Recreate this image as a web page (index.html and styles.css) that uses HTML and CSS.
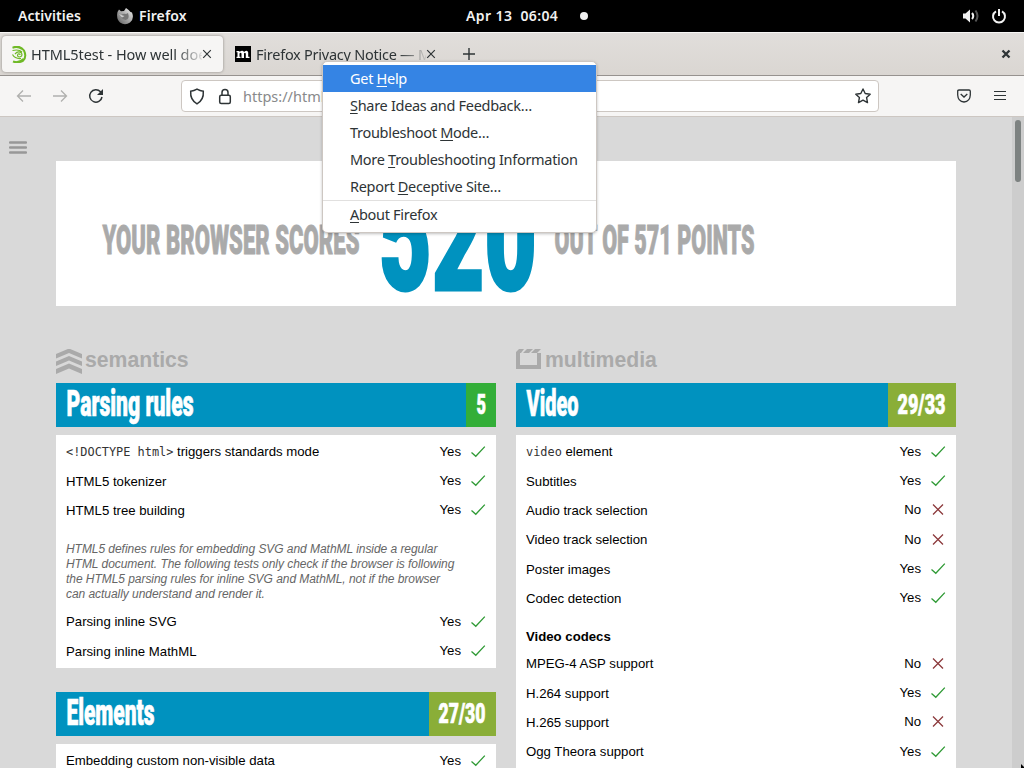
FILE: index.html
```html
<!DOCTYPE html>
<html lang="en">
<head>
<meta charset="utf-8">
<title>HTML5test - How well does your browser support HTML5?</title>
<link rel="stylesheet" href="styles.css">
</head>
<body>
<svg class="defs" aria-hidden="true">
  <symbol id="yes" viewBox="0 0 16 14"><path d="M1.500 7.500 5.800 11.300 14.800 1.600" fill="none" stroke="#2f9a35" stroke-width="1.3"/></symbol>
  <symbol id="no" viewBox="0 0 16 14"><path d="M3 1.500 13 11.500M13 1.500 3 11.500" fill="none" stroke="#8c3a3c" stroke-width="1.3"/></symbol>
  <symbol id="x" viewBox="0 0 10 10"><path d="M1.2 1.2 8.8 8.8M8.8 1.2 1.2 8.8" fill="none" stroke="#2e3436" stroke-width="1.2"/></symbol>
</svg>

<header class="topbar">
  <span class="activities">Activities</span>
  <svg class="fox" width="18" height="18" viewBox="0 0 18 18"><defs><linearGradient id="fg" x1="1" y1="0" x2="0" y2="1"><stop offset="0" stop-color="#f4f4f4"/><stop offset=".55" stop-color="#a0a0a0"/><stop offset="1" stop-color="#5c5c5c"/></linearGradient></defs><path d="M1.500 5 3 2.500 5 4.300 8 4 10 1Q13 3 14.500 5L16 5.500Q18.500 12 14 15.500 9 19 4 15.500 0 12 1.500 5Z" fill="url(#fg)"/><path d="M5 8Q8 6 10 7L12 6Q14 12 9.500 13 6 12.500 5 10L8 9.500Z" fill="#777"/><path d="M3 7 6.500 8.500 8.500 9 6 10.500" fill="#cfcfcf"/></svg>
  <span class="app">Firefox</span>
  <span class="clock">Apr 13&nbsp; 06:04</span>
  <i class="dot"></i>
  <span class="status">
    <svg width="18" height="16" viewBox="0 0 18 16"><path d="M1 5.500H3.500L8 1.500V14.500L3.500 10.500H1Z" fill="#f2f2f2"/><path d="M10 5Q12.500 8 10 11" fill="none" stroke="#f2f2f2" stroke-width="2"/><path d="M13.500 2.500Q17.500 8 13.500 13.500" fill="none" stroke="#555" stroke-width="2"/></svg>
    <svg width="16" height="16" viewBox="0 0 16 16"><path d="M5 3.300A6 6 0 1 0 11 3.300M8 1V8" fill="none" stroke="#f2f2f2" stroke-width="2"/></svg>
  </span>
</header>

<div class="tabs">
  <div class="tab active">
    <svg width="16" height="17" viewBox="0 0 16 17"><path d="M2 1.500Q9-1 13 4.500 16 11 12 14.800 7 17.500 2 15.500M1.500 1.700Q7 0 11 3M3 16Q9 17 12.500 13" fill="none" stroke="#6fb926" stroke-width="2"/><path d="M1.500 4.500Q8 3 11 6M1.500 8.500Q4 13 10 12.500M4 8Q7 4.500 10.500 7 12 10.500 8.500 11 5.500 10.500 7 8 9 7.500 9 9" fill="none" stroke="#6fb926" stroke-width="1.200"/></svg>
    <span class="title t1">HTML5test - How well does your</span>
    <svg class="close" width="10" height="10"><use href="#x"/></svg>
  </div>
  <div class="tab">
    <svg width="16" height="16" viewBox="0 0 16 16"><path d="M0 0H16V16H0Z"/><path d="M1.500 5H4.500V6Q7.500 3.500 9 6 12.500 3.500 13.200 6.500V10.700H14.500V12H10.800V7.500Q9.800 6 9 7.500V12H6.500V7.500Q5.500 6 4.500 7.500V10.700H5.500V12H1.500V10.700H2.500V6.300H1.500Z" fill="#fff"/></svg>
    <span class="title t2">Firefox Privacy Notice — Mozilla</span>
    <svg class="close" width="10" height="10"><use href="#x"/></svg>
  </div>
  <svg class="plus" width="12" height="12" viewBox="0 0 12 12"><path d="M0 6H12M6 0V12" stroke="#2e3436" stroke-width="1.400"/></svg>
  <svg class="winclose" width="10" height="10" viewBox="0 0 10 10"><path d="M1.500 1.500 8.500 8.500M8.500 1.500 1.500 8.500" stroke="#2e3436" stroke-width="2.300"/></svg>
</div>

<nav class="toolbar">
  <svg class="back" width="16" height="14" viewBox="0 0 16 14"><path d="M15 7H1.500M7 1.500 1.500 7 7 12.500" fill="none" stroke="#b0b0ae" stroke-width="1.300"/></svg>
  <svg class="fwd" width="16" height="14" viewBox="0 0 16 14"><path d="M1 7H14.500M9 1.500 14.500 7 9 12.500" fill="none" stroke="#b0b0ae" stroke-width="1.300"/></svg>
  <svg class="reload" width="16" height="16" viewBox="0 0 16 16"><path d="M14 9A6.200 6.200 0 1 1 12.500 3.800L14 5.500" fill="none" stroke="#2e3436" stroke-width="1.500"/><path d="M15 1V7H9Z" fill="#2e3436"/></svg>
  <div class="urlbar">
    <svg width="16" height="17" viewBox="0 0 16 17"><path d="M8 1.200Q11 3 14.300 3.300 15 12 8 15.800 1 12 1.700 3.300 5 3 8 1.200Z" fill="none" stroke="#2e3436" stroke-width="1.500"/></svg>
    <svg width="14" height="17" viewBox="0 0 14 17"><rect x="1.700" y="7.300" width="10.600" height="8.200" rx="1.500" fill="none" stroke="#2e3436" stroke-width="1.500"/><path d="M4 7V4.500A3 3 0 0 1 10 4.500V7" fill="none" stroke="#2e3436" stroke-width="1.500"/></svg>
    <span class="url">https://html5test.com</span>
    <svg class="star" width="16" height="16" viewBox="0 0 16 16"><path d="M8 1 10.200 5.500 15.200 6.200 11.600 9.600 12.500 14.600 8 12.200 3.500 14.600 4.400 9.600 .8 6.200 5.800 5.500Z" fill="none" stroke="#2e3436" stroke-width="1.400" stroke-linejoin="round"/></svg>
  </div>
  <svg class="pocket" width="14" height="14" viewBox="0 0 14 14"><path d="M2 1H12Q13.300 1 13.300 2.300V6Q13 12.500 7 13 1 12.500 .7 6V2.300Q.7 1 2 1Z M3.700 5 7 8 10.300 5" fill="none" stroke="#2e3436" stroke-width="1.300"/></svg>
  <svg class="burger" width="12" height="10" viewBox="0 0 12 10"><path d="M0 .5H12M0 4.500H12M0 8.500H12" stroke="#2e3436" stroke-width="1"/></svg>
</nav>

<main class="page">
  <svg class="sitemenu" width="18" height="13" viewBox="0 0 18 13"><path d="M1 1.500H17M1 6.500H17M1 11.500H17" stroke="#989898" stroke-width="2.300" stroke-linecap="round"/></svg>
  <div class="content">
    <section class="score">
      <svg width="900" height="145" viewBox="0 0 900 145">
        <g class="narrow">
          <text class="points" x="46.500" y="92.500" font-size="41.500" textLength="257" lengthAdjust="spacingAndGlyphs">YOUR BROWSER SCORES</text>
          <text class="total" x="323" y="129" font-size="152" textLength="158" lengthAdjust="spacingAndGlyphs">520</text>
          <text class="points" x="498.500" y="92.500" font-size="41.500" textLength="200" lengthAdjust="spacingAndGlyphs">OUT OF 571 POINTS</text>
        </g>
      </svg>
    </section>
    <div class="columns">
      <div class="column">
        <h2><svg width="26" height="26" viewBox="0 0 26 26"><path d="M0 5 13 -.5 26 5V9.500L13 4 0 9.500ZM0 12.500 13 7 26 12.500V17L13 11.500 0 17ZM0 20 13 14.500 26 20V25L13 19.500 0 25Z" fill="#aaa"/></svg>semantics</h2>
        <h3><svg width="400" height="44"><text class="narrow" x="10.500" y="33" font-size="36.500" textLength="127" lengthAdjust="spacingAndGlyphs">Parsing rules</text></svg><span class="grade full"><svg width="30" height="44"><text class="narrow" x="10.500" y="31" font-size="28.500" textLength="9.500" lengthAdjust="spacingAndGlyphs">5</text></svg></span></h3>
        <div class="table first">
          <div class="row"><span><code>&lt;!DOCTYPE html&gt;</code> triggers standards mode</span><b>Yes</b><svg><use href="#yes"/></svg></div>
          <div class="row"><span>HTML5 tokenizer</span><b>Yes</b><svg><use href="#yes"/></svg></div>
          <div class="row"><span>HTML5 tree building</span><b>Yes</b><svg><use href="#yes"/></svg></div>
          <p class="note">HTML5 defines rules for embedding SVG and MathML inside a regular<br>HTML document. The following tests only check if the browser is following<br>the HTML5 parsing rules for inline SVG and MathML, not if the browser<br>can actually understand and render it.</p>
          <div class="row"><span>Parsing inline SVG</span><b>Yes</b><svg><use href="#yes"/></svg></div>
          <div class="row"><span>Parsing inline MathML</span><b>Yes</b><svg><use href="#yes"/></svg></div>
        </div>
        <h3><svg width="360" height="44"><text class="narrow" x="10.500" y="33" font-size="36.500" textLength="88" lengthAdjust="spacingAndGlyphs">Elements</text></svg><span class="grade"><svg width="67" height="44"><text class="narrow" x="9.500" y="31" font-size="28.500" textLength="47" lengthAdjust="spacingAndGlyphs">27/30</text></svg></span></h3>
        <div class="table">
          <div class="row"><span>Embedding custom non-visible data</span><b>Yes</b><svg><use href="#yes"/></svg></div>
        </div>
      </div>
      <div class="column">
        <h2><svg width="26" height="26" viewBox="0 0 26 26"><path d="M0 3 3 0H8L5 4H4V16H21V4H25V20H0ZM7 4 11 0H17L13 4ZM15 4 19 0H25L21 4Z" fill="#aaa"/></svg>multimedia</h2>
        <h3><svg width="360" height="44"><text class="narrow" x="10.500" y="33" font-size="36.500" textLength="52" lengthAdjust="spacingAndGlyphs">Video</text></svg><span class="grade"><svg width="68" height="44"><text class="narrow" x="9.500" y="31" font-size="28.500" textLength="48" lengthAdjust="spacingAndGlyphs">29/33</text></svg></span></h3>
        <div class="table">
          <div class="row"><span><code>video</code> element</span><b>Yes</b><svg><use href="#yes"/></svg></div>
          <div class="row"><span>Subtitles</span><b>Yes</b><svg><use href="#yes"/></svg></div>
          <div class="row"><span>Audio track selection</span><b>No</b><svg><use href="#no"/></svg></div>
          <div class="row"><span>Video track selection</span><b>No</b><svg><use href="#no"/></svg></div>
          <div class="row"><span>Poster images</span><b>Yes</b><svg><use href="#yes"/></svg></div>
          <div class="row"><span>Codec detection</span><b>Yes</b><svg><use href="#yes"/></svg></div>
          <h4>Video codecs</h4>
          <div class="row"><span>MPEG-4 ASP support</span><b>No</b><svg><use href="#no"/></svg></div>
          <div class="row"><span>H.264 support</span><b>Yes</b><svg><use href="#yes"/></svg></div>
          <div class="row"><span>H.265 support</span><b>No</b><svg><use href="#no"/></svg></div>
          <div class="row"><span>Ogg Theora support</span><b>Yes</b><svg><use href="#yes"/></svg></div>
        </div>
      </div>
    </div>
  </div>
  <div class="scrollbar"><i></i></div>
</main>

<div class="menu">
  <div class="item selected">Get <u>H</u>elp</div>
  <div class="item"><u>S</u>hare Ideas and Feedback…</div>
  <div class="item">Troubleshoot <u>M</u>ode…</div>
  <div class="item">More <u>T</u>roubleshooting Information</div>
  <div class="item">Report <u>D</u>eceptive Site…</div>
  <hr>
  <div class="item"><u>A</u>bout Firefox</div>
</div>
<svg class="pointer" width="3" height="4" viewBox="0 0 3 4"><path d="M0 0 3 3V4H0Z"/></svg>
</body>
</html>
```
FILE: styles.css
```css
* { box-sizing: border-box; }
body { margin: 0; width: 1024px; height: 768px; overflow: hidden; position: relative; background: #d9d9d9; font-family: "Noto Sans", sans-serif; font-size: 14px; color: #2e3436; }
svg { display: block; flex: none; }
.defs { position: absolute; width: 0; height: 0; }

.topbar { height: 32px; padding-bottom: 1px; background: #000; color: #f2f2f2; display: flex; align-items: center; font-weight: 600; font-size: 14px; white-space: nowrap; }
.activities { margin-left: 18px; width: 98px; letter-spacing: .05px; }
.app { margin-left: 5px; width: 327px; letter-spacing: .1px; }
.clock { width: 114px; letter-spacing: .4px; }
.dot { width: 8px; height: 8px; border-radius: 50%; background: #f2f2f2; }
.status { margin-left: auto; margin-right: 17px; display: flex; gap: 11px; }

.tabs { height: 44px; background: linear-gradient(#e1dedb, #dad6d2); border-top: 1px solid #f7f6f5; border-bottom: 1px solid #96928f; display: flex; align-items: center; }
.tab { width: 221px; height: 36px; display: flex; align-items: center; padding-left: 9px; margin-left: 2px; border-radius: 4px; }
.tab + .tab { padding-left: 10px; }
.tab.active { background: #f6f5f4; box-shadow: 0 0 3px #8c8884; }
.title { margin-left: 5px; width: 170px; height: 22px; line-height: 22px; overflow: hidden; white-space: nowrap; font-size: 14.5px; -webkit-mask-image: linear-gradient(90deg, #000 84%, transparent 102%); mask-image: linear-gradient(90deg, #000 84%, transparent 102%); }
.t1 { margin-left: 4px; width: 171px; letter-spacing: -.06px; }
.t2 { letter-spacing: -.25px; }
.plus { margin-left: 17px; }
.winclose { margin-left: auto; margin-right: 13px; }

.toolbar { height: 41px; background: #f6f5f4; border-bottom: 1px solid #cdc7c2; display: flex; align-items: center; }
.back { margin-left: 16px; }
.fwd { margin-left: 20px; }
.reload { margin-left: 20px; }
.urlbar { margin-left: 77px; width: 698px; height: 32px; background: #fff; border: 1px solid #cdc7c2; border-radius: 4px; display: flex; align-items: center; padding: 0 7px; }
.urlbar svg + svg { margin-left: 13px; }
.url { margin-left: 11px; color: #888a8b; font-size: 14.5px; }
.star { margin-left: auto; }
.pocket { margin-left: 78px; }
.burger { margin-left: 23px; }

.page { height: 651px; display: flex; background: #d9d9d9; overflow: hidden; font-family: "Liberation Sans", sans-serif; color: #000; }
.sitemenu { margin: 23.500px 0 0 9px; }
.content { margin: 44px 0 0 29px; width: 900px; }
.scrollbar { margin-left: auto; width: 12px; background: #cdcdcd; padding: 3px 0 0 3px; }
.scrollbar i { display: block; width: 6px; height: 62px; border-radius: 3px; background: #7d8281; }
.score { height: 145px; background: #fff; }
.narrow { font-family: Roboto, sans-serif; font-weight: 900; stroke-width: .7px; }
h3 .narrow { stroke: #fff; }
.points { fill: #aaa; stroke: #aaa; stroke-width: .9px; }
.total { fill: #0092bf; stroke: #0092bf; stroke-width: 3px; }
.columns { display: flex; gap: 20px; margin-top: 43px; }
.column { width: 440px; }
h2 { margin: 0 0 8px; height: 26px; display: flex; gap: 3px; font-size: 21.2px; line-height: 22px; color: #aaa; }
h3 { margin: 0; height: 44px; background: #0092bf; fill: #fff; display: flex; justify-content: space-between; }
.grade { background: #8aae38; }
.grade.full { background: #33ae38; }
.table { background: #fff; margin: 8px 0 24px; padding: 2px 0; font-size: 13.2px; }
.table.first { height: 233px; }
.row { height: 29.35px; display: flex; align-items: center; padding: 0 10px; }
.row span { flex: 1; }
.row b { font-weight: normal; padding-bottom: 1px; }
.row svg { width: 16px; height: 14px; margin-left: 9px; }
code { font-family: "DejaVu Sans Mono", monospace; font-size: 11.9px; color: #333; }
.note { margin: 17px 10px 5px; font-size: 12px; letter-spacing: -.05px; line-height: 15px; font-style: italic; color: #666; white-space: nowrap; }
h4 { margin: 0; height: 36px; padding: 16px 10px 0; font-size: 13.2px; line-height: 15px; }

.menu { position: absolute; left: 322px; top: 61px; width: 275px; height: 172px; padding-top: 3px; background: #fff; border: 1px solid #cdc7c2; border-radius: 5px; box-shadow: 0 1px 3px rgba(0,0,0,.25); }
.item { height: 27px; line-height: 27px; padding-left: 27px; font-size: 14.5px; letter-spacing: -.3px; white-space: nowrap; }
.item.selected { background: #3584e4; color: #fff; }
.menu hr { height: 1px; border: 0; margin: 0; background: #e1e0df; }
.menu u { text-underline-offset: 2px; }
.pointer { position: absolute; right: 0; bottom: 0; }
```
